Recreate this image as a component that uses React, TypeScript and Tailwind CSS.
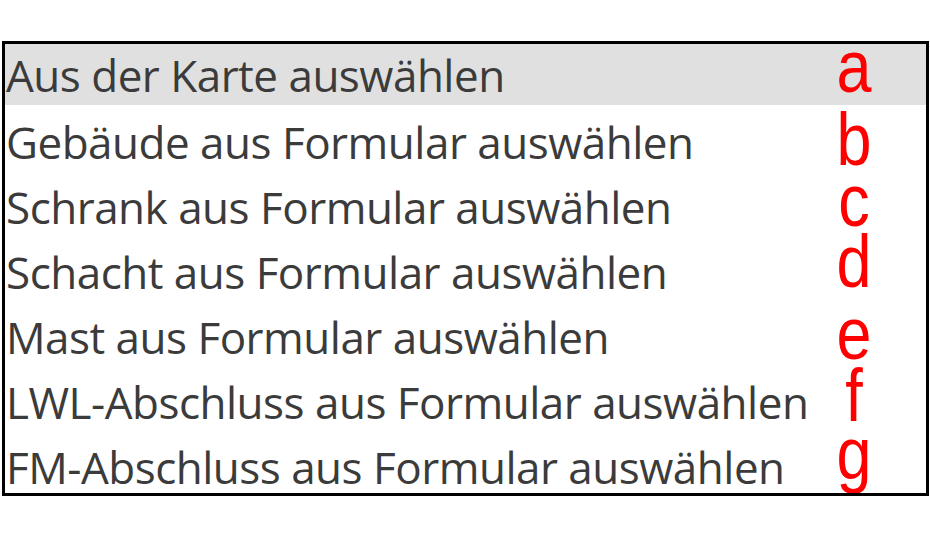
const items = [
  'Aus der Karte auswählen',
  'Gebäude aus Formular auswählen',
  'Schrank aus Formular auswählen',
  'Schacht aus Formular auswählen',
  'Mast aus Formular auswählen',
  'LWL-Abschluss aus Formular auswählen',
  'FM-Abschluss aus Formular auswählen',
];

// annotation letters, with the spacing they have in the picture
const letters = [
  { l: 'a', h: 'h-[73px]' },
  { l: 'b', h: 'h-[61px]' },
  { l: 'c', h: 'h-[61px]' },
  { l: 'd', h: 'h-[72px]' },
  { l: 'e', h: 'h-[62px]' },
  { l: 'f', h: 'h-[58px]' },
  { l: 'g', h: 'h-[52px]' },
];

export default function App() {
  return (
    <div className="h-[541px] w-[930px] bg-white pl-[2px] pt-[41px]">
      <div className="relative h-[455px] w-[927px] overflow-hidden border-[3px] border-black">
        <ul className="font-['Open_Sans',sans-serif] text-[44px] tracking-[-0.5px] text-[#3b3b3b]">
          {items.map((item, i) => (
            <li
              key={item}
              className={
                i === 0
                  ? 'mb-[4px] flex h-[61px] items-center bg-[#e0e0e0] pl-[1px]'
                  : 'flex h-[65px] items-center pl-[1px]'
              }
            >
              <span className="leading-none">{item}</span>
            </li>
          ))}
        </ul>

        <div className="absolute left-[824px] top-0 flex flex-col font-['Liberation_Sans',Arial,sans-serif] text-[74px] leading-[46px] text-[#ff0000]">
          {letters.map(({ l, h }) => (
            <div key={l} className={`${h} w-[50px] scale-x-[0.85] text-center`}>
              {l}
            </div>
          ))}
        </div>
      </div>
    </div>
  );
}
